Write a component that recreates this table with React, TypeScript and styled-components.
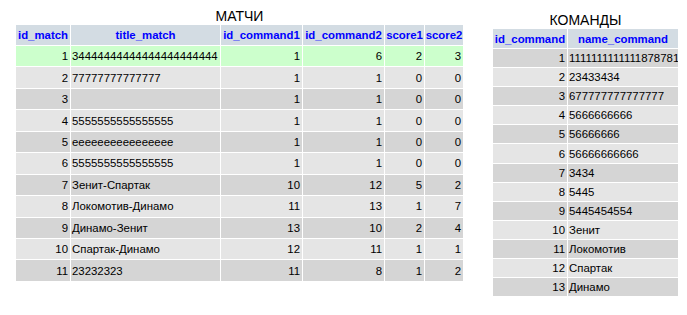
import React from 'react';
import styled, { createGlobalStyle } from 'styled-components';

const GlobalStyle = createGlobalStyle`
  html, body {
    margin: 0;
    padding: 0;
    background: #ffffff;
  }
  body {
    font-family: "Liberation Sans", Arial, sans-serif;
  }
`;

const Page = styled.div`
  display: flex;
  align-items: flex-start;
  gap: 28px;
  padding: 8px 0 0 15px;
  width: 687px;
  height: 315px;
  box-sizing: border-box;
`;

const Block = styled.div<{ $offset: number }>`
  display: flex;
  flex-direction: column;
  align-items: center;
  padding-top: ${(p) => p.$offset}px;
`;

const Title = styled.div`
  font-size: 14px;
  line-height: 16px;
  color: #000;
`;

const Table = styled.table<{ $w: number }>`
  width: ${(p) => p.$w}px;
  border-collapse: separate;
  border-spacing: 1px;
  table-layout: fixed;
  font-size: 11.4px;
  color: #000;
`;

const Th = styled.th<{ $w: number; $h: number }>`
  width: ${(p) => p.$w}px;
  height: ${(p) => p.$h}px;
  padding: 0;
  background: #d3dce3;
  color: #0000ff;
  font-weight: bold;
  text-align: center;
  white-space: nowrap;
  overflow: hidden;
`;

const Td = styled.td<{ $bg: string; $h: number; $num?: boolean }>`
  height: ${(p) => p.$h}px;
  padding: 0 ${(p) => (p.$num ? '2px' : '0')} 0 ${(p) => (p.$num ? '0' : '1px')};
  background: ${(p) => p.$bg};
  text-align: ${(p) => (p.$num ? 'right' : 'left')};
  white-space: nowrap;
  overflow: hidden;
`;

const LIGHT = '#e5e5e5';
const DARK = '#d5d5d5';
const MARKED = '#ccffcc';

const matches: [number, string, number, number, number, number][] = [
  [1, '34444444444444444444444', 1, 6, 2, 3],
  [2, '77777777777777', 1, 1, 0, 0],
  [3, '', 1, 1, 0, 0],
  [4, '5555555555555555', 1, 1, 0, 0],
  [5, 'eeeeeeeeeeeeeeee', 1, 1, 0, 0],
  [6, '5555555555555555', 1, 1, 0, 0],
  [7, 'Зенит-Спартак', 10, 12, 5, 2],
  [8, 'Локомотив-Динамо', 11, 13, 1, 7],
  [9, 'Динамо-Зенит', 13, 10, 2, 4],
  [10, 'Спартак-Динамо', 12, 11, 1, 1],
  [11, '23232323', 11, 8, 1, 2],
];

const commands: [number, string][] = [
  [1, '1111111111111878781'],
  [2, '23433434'],
  [3, '677777777777777'],
  [4, '5666666666'],
  [5, '56666666'],
  [6, '56666666666'],
  [7, '3434'],
  [8, '5445'],
  [9, '5445454554'],
  [10, 'Зенит'],
  [11, 'Локомотив'],
  [12, 'Спартак'],
  [13, 'Динамо'],
];

const matchCols = [
  { name: 'id_match', w: 54 },
  { name: 'title_match', w: 149 },
  { name: 'id_command1', w: 81 },
  { name: 'id_command2', w: 81 },
  { name: 'score1', w: 39 },
  { name: 'score2', w: 38 },
];

function App() {
  return (
    <>
      <GlobalStyle />
      <Page>
        <Block $offset={0}>
          <Title>МАТЧИ</Title>
          <Table $w={449}>
            <thead>
              <tr>
                {matchCols.map((c) => (
                  <Th key={c.name} $w={c.w} $h={20}>
                    {c.name}
                  </Th>
                ))}
              </tr>
            </thead>
            <tbody>
              {matches.map((m, i) => {
                const bg = i === 0 ? MARKED : i % 2 === 1 ? LIGHT : DARK;
                return (
                  <tr key={m[0]}>
                    <Td $bg={bg} $h={20.45} $num>{m[0]}</Td>
                    <Td $bg={bg} $h={20.45}>{m[1]}</Td>
                    <Td $bg={bg} $h={20.45} $num>{m[2]}</Td>
                    <Td $bg={bg} $h={20.45} $num>{m[3]}</Td>
                    <Td $bg={bg} $h={20.45} $num>{m[4]}</Td>
                    <Td $bg={bg} $h={20.45} $num>{m[5]}</Td>
                  </tr>
                );
              })}
            </tbody>
          </Table>
        </Block>
        <Block $offset={4}>
          <Title>КОМАНДЫ</Title>
          <Table $w={187}>
            <thead>
              <tr>
                <Th $w={74} $h={19}>id_command</Th>
                <Th $w={110} $h={19}>name_command</Th>
              </tr>
            </thead>
            <tbody>
              {commands.map((c, i) => {
                const bg = i % 2 === 0 ? DARK : LIGHT;
                return (
                  <tr key={c[0]}>
                    <Td $bg={bg} $h={18.1} $num>{c[0]}</Td>
                    <Td $bg={bg} $h={18.1}>{c[1]}</Td>
                  </tr>
                );
              })}
            </tbody>
          </Table>
        </Block>
      </Page>
    </>
  );
}

export default App;
